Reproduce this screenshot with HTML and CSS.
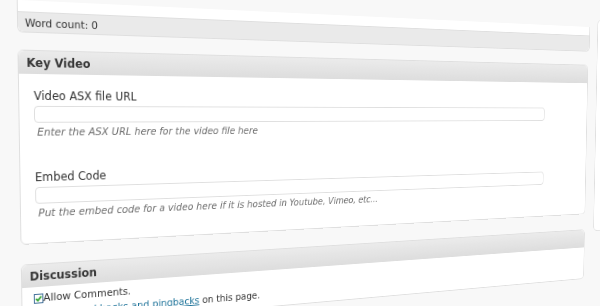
FILE: index.html
```html
<!DOCTYPE html>
<html lang="en">
<head>
    <meta charset="UTF-8">
    <meta name="viewport" content="width=device-width, initial-scale=1.0">
    <title>Edit Page</title>
    <link rel="stylesheet" href="styles.css">
</head>
<body>
    <div class="screen">
        <div class="columns">
            <div class="main">
                <!-- Editor footer -->
                <div class="editor">
                    <div class="editor-area"></div>
                    <div class="post-status">Word count: <span id="wordCount">0</span></div>
                </div>

                <!-- Key Video meta box -->
                <div class="postbox">
                    <h3>Key Video</h3>
                    <div class="inside">
                        <div class="field">
                            <label for="videoAsx">Video ASX file URL</label>
                            <input type="text" id="videoAsx">
                            <p class="howto">Enter the ASX URL here for the video file here</p>
                        </div>
                        <div class="field">
                            <label for="embedCode">Embed Code</label>
                            <input type="text" id="embedCode">
                            <p class="howto">Put the embed code for a video here if it is hosted in Youtube, Vimeo, etc...</p>
                        </div>
                    </div>
                </div>

                <!-- Discussion meta box -->
                <div class="postbox discussion">
                    <h3>Discussion</h3>
                    <div class="inside">
                        <p class="check-row">
                            <svg class="check" width="10" height="10" viewBox="0 0 10 10"><rect x="0.5" y="0.5" width="9" height="9" fill="#fff" stroke="#3f6e98"/><path d="M2.2 5 L4.2 7 L7.9 2.8" fill="none" stroke="#1f9d1f" stroke-width="1.7"/></svg><span>Allow Comments.</span>
                        </p>
                        <p class="check-row">
                            <svg class="check" width="10" height="10" viewBox="0 0 10 10"><rect x="0.5" y="0.5" width="9" height="9" fill="#fff" stroke="#3f6e98"/><path d="M2.2 5 L4.2 7 L7.9 2.8" fill="none" stroke="#1f9d1f" stroke-width="1.7"/></svg><span>Allow <a href="#">trackbacks and pingbacks</a> on this page.</span>
                        </p>
                    </div>
                </div>
            </div>

            <!-- Sidebar -->
            <div class="side">
                <div class="side-box"></div>
            </div>
        </div>
    </div>
</body>
</html>
```

FILE: styles.css
```css
html, body { margin: 0; height: 100%; overflow: hidden; background: #f8f8f8; }
body { font-family: "DejaVu Sans", Verdana, sans-serif; color: #333; }

/* the screenshot is seen at an angle */
.screen { width: 1100px; height: 420px; padding-left: 18px; box-sizing: border-box; transform-origin: 0 0;
    transform: matrix3d(0.99925, 0.046944, 0, 0.00041219, 0.016941, 1.02364, 0, 0.000064063, 0, 0, 1, 0, -1.14777, -0.991, 0, 1); }
.columns { display: flex; align-items: flex-start; gap: 13px; }
.main { width: 764px; }

.editor { background: #fff; border: 1px solid #dfdfdf; border-top: none; border-radius: 0 0 6px 6px; }
.editor-area { height: 11px; }
.post-status { background: #eaeaea; border-top: 1px solid #dfdfdf; border-radius: 0 0 6px 6px; padding: 2px 7px 0; line-height: 17px; font-size: 11px; }

.postbox { width: 760px; margin-top: 17px; background: #fff; border: 1px solid #dfdfdf; border-radius: 6px; }
.postbox h3 { margin: 0; padding: 1px 8px 0; font-size: 12px; line-height: 22px; color: #363636; background: linear-gradient(to bottom, #ebebeb, #dddddd); border-radius: 6px 6px 0 0; }
.inside { padding: 15px 0 23px 15px; }

.field label { display: block; font-size: 12px; line-height: 15px; }
.field input { display: block; box-sizing: border-box; width: 673px; height: 17px; margin: 2px 0 0; padding: 0 4px; border: 1px solid #dfdfdf; border-radius: 4px; background: #fff; }
.field + .field { margin-top: 31px; }
.howto { margin: 3px 0 0 3px; font-size: 11px; line-height: 14px; font-style: italic; color: #6e6e6e; }

.discussion { margin-top: 20px; }
.discussion .inside { padding: 4px 0 5px 12px; }
.check-row { margin: 0; font-size: 11px; line-height: 16px; }
.check { vertical-align: -2px; }
.check-row a { color: #21759b; }

.side { width: 300px; }
.side-box { height: 276px; margin-top: -10px; background: #fff; border: 1px solid #dfdfdf; border-radius: 6px; }
```
